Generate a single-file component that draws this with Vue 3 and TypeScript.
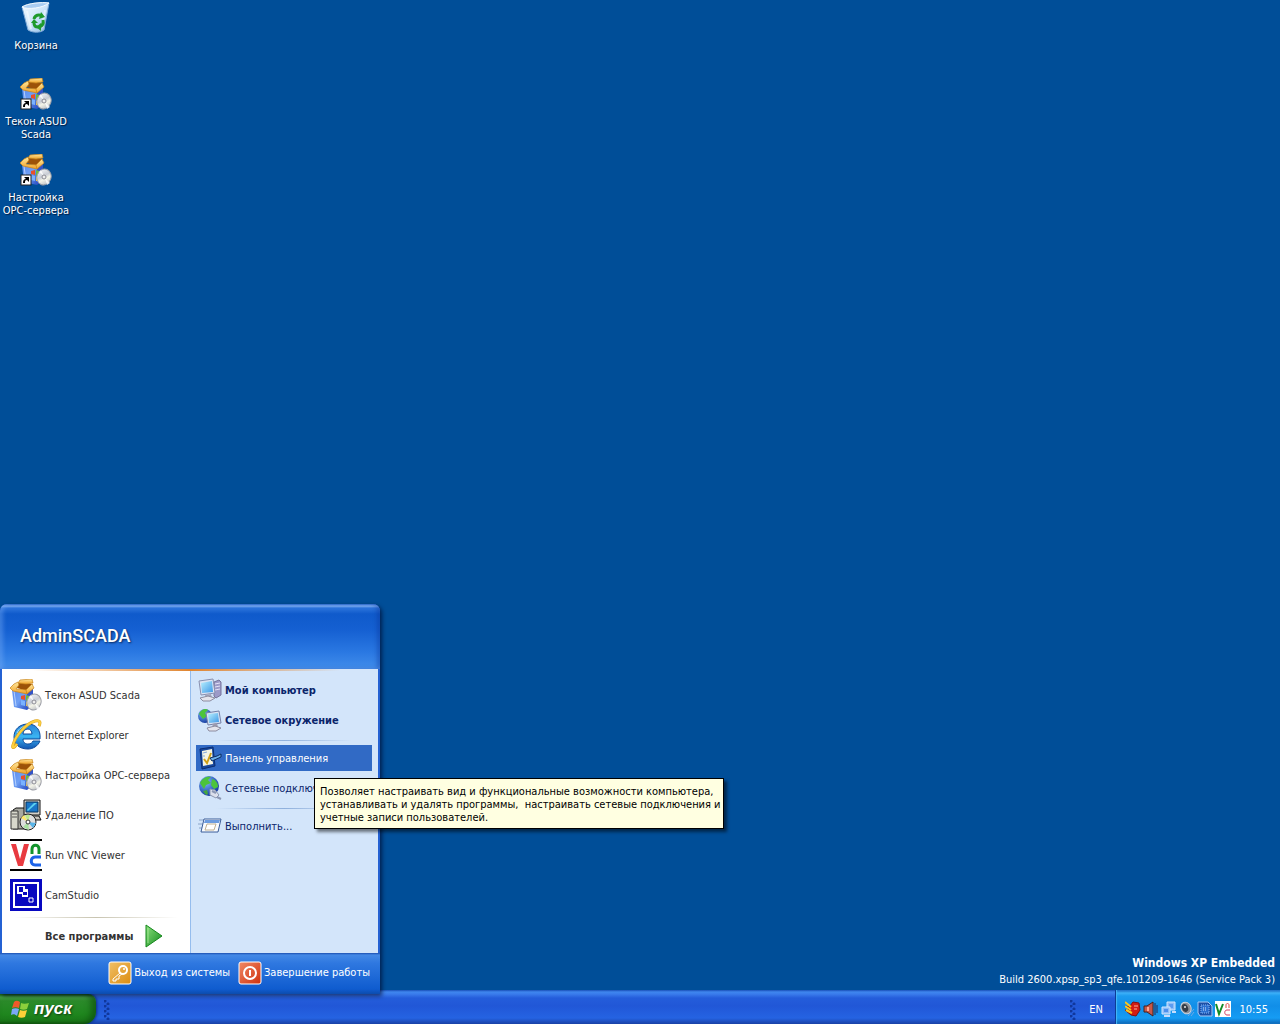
<script setup lang="ts">
interface Entry {
  icon: string
  label: string
}

const shortcuts: Entry[] = [
  { icon: 'bin', label: 'Корзина' },
  { icon: 'setup-link', label: 'Текон ASUD Scada' },
  { icon: 'setup-link', label: 'Настройка OPC-сервера' },
]

const programs: Entry[] = [
  { icon: 'setup', label: 'Текон ASUD Scada' },
  { icon: 'ie', label: 'Internet Explorer' },
  { icon: 'setup', label: 'Настройка OPC-сервера' },
  { icon: 'uninstall', label: 'Удаление ПО' },
  { icon: 'vnc', label: 'Run VNC Viewer' },
  { icon: 'cam', label: 'CamStudio' },
]

const places: Entry[] = [
  { icon: 'computer', label: 'Мой компьютер' },
  { icon: 'network', label: 'Сетевое окружение' },
]

const settings: Entry[] = [
  { icon: 'panel', label: 'Панель управления' },
  { icon: 'globe', label: 'Сетевые подключения' },
]

const activeItem = 'Панель управления'

const trayIcons: string[] = ['t-av', 't-sound', 't-lan', 't-speaker', 't-chip', 't-vnc']
</script>

<template>
  <div class="screen">
    <svg class="defs" width="0" height="0" aria-hidden="true">
      <defs>
        <linearGradient id="g-box" x1="0" y1="0" x2="1" y2="1">
          <stop offset="0" stop-color="#5c8cf0" />
          <stop offset="0.5" stop-color="#6fa0f4" />
          <stop offset="1" stop-color="#2b4fc4" />
        </linearGradient>
        <linearGradient id="g-flap" x1="0" y1="0" x2="0" y2="1">
          <stop offset="0" stop-color="#ffe9a0" />
          <stop offset="1" stop-color="#f0a024" />
        </linearGradient>
        <linearGradient id="g-disc" x1="0" y1="0" x2="1" y2="1">
          <stop offset="0" stop-color="#ffffff" />
          <stop offset="0.45" stop-color="#c8ccd4" />
          <stop offset="0.6" stop-color="#f4f4e8" />
          <stop offset="1" stop-color="#a8acb8" />
        </linearGradient>
        <linearGradient id="g-bin" x1="0" y1="0" x2="1" y2="1">
          <stop offset="0" stop-color="#f4fbff" />
          <stop offset="0.5" stop-color="#cfe6fa" />
          <stop offset="1" stop-color="#8dbbe8" />
        </linearGradient>
        <linearGradient id="g-ie" x1="0" y1="0" x2="0" y2="1">
          <stop offset="0" stop-color="#2a80d4" />
          <stop offset="0.5" stop-color="#39b4f2" />
          <stop offset="1" stop-color="#1254b0" />
        </linearGradient>
        <linearGradient id="g-screen" x1="0" y1="0" x2="1" y2="1">
          <stop offset="0" stop-color="#b8f0ff" />
          <stop offset="1" stop-color="#3d97e6" />
        </linearGradient>
        <radialGradient id="g-globe" cx="0.35" cy="0.3" r="0.8">
          <stop offset="0" stop-color="#7cb8ff" />
          <stop offset="1" stop-color="#0b2f96" />
        </radialGradient>
        <linearGradient id="g-arrow" x1="0" y1="0" x2="1" y2="1">
          <stop offset="0" stop-color="#8be07c" />
          <stop offset="1" stop-color="#118a1c" />
        </linearGradient>
        <linearGradient id="g-key" x1="0" y1="0" x2="1" y2="1">
          <stop offset="0" stop-color="#f0c068" />
          <stop offset="1" stop-color="#dc8c10" />
        </linearGradient>
        <linearGradient id="g-power" x1="0" y1="0" x2="1" y2="1">
          <stop offset="0" stop-color="#f08a66" />
          <stop offset="1" stop-color="#d0300c" />
        </linearGradient>
      </defs>

      <symbol id="bin" viewBox="0 0 32 32">
        <path d="M2 5C8 1 22 0 29 1l-5 27c-4 3-11 3-16 0z" fill="url(#g-bin)" stroke="#7fa9d6" />
        <path d="M2 5c6 3 21 1 27-4-7-1-21 0-27 4z" fill="#a9cdf2" stroke="#f4fbff" />
        <path d="M7 9l4 18M25 8l-3 18" stroke="#fff" stroke-width="2" opacity="0.5" />
        <g fill="none" stroke="#1f9a2c" stroke-width="3">
          <path d="M14 17c1-4 5-5 8-3" />
          <path d="M23 18c1 4-1 6-4 7" />
          <path d="M18 25c-3 0-4-2-4-4" />
        </g>
        <path d="M21 10l4 5-6 2zM21 21l-5 4 5 4zM11 21l3-4 4 4z" fill="#1f9a2c" />
      </symbol>

      <symbol id="setup" viewBox="0 0 32 32">
        <path d="M2 11l15 3v17L4 28z" fill="url(#g-box)" />
        <path d="M17 14l6-6v18l-6 5z" fill="#3454c8" />
        <path d="M4 12l2 15" stroke="#b4d0ff" />
        <path d="M4 8l5-4 14 1-6 7z" fill="#9c5208" />
        <path d="M8 4l2-3 12-1 1 4-7 1z" fill="url(#g-flap)" stroke="#c88418" stroke-width="0.7" />
        <path d="M0 9l4-4 4-2 1 3-3 4 11 1v4L3 12z" fill="url(#g-flap)" stroke="#c88418" stroke-width="0.7" />
        <path d="M16 11l6-6 2 4-7 6z" fill="url(#g-flap)" stroke="#c88418" stroke-width="0.7" />
        <path d="M11 17l4-1v5l-4-1z" fill="#e8502a" />
        <path d="M16 16l3 1v4l-3 1z" fill="#6cbc3c" />
        <path d="M11 21l4 1v5l-4-1z" fill="#7ab2ff" />
        <path d="M16 23l2-1v5h-2z" fill="#f8ca3c" />
        <ellipse cx="24" cy="23" rx="7" ry="8" transform="rotate(22 24 23)" fill="url(#g-disc)" stroke="#9c9ea6" />
        <path d="M24 22l-5-4 2-2zM25 24l2 7 3-2z" fill="#fff" opacity="0.8" />
        <circle cx="24" cy="23" r="2" fill="#eee" stroke="#8c8c94" />
      </symbol>

      <symbol id="setup-link" viewBox="0 0 32 32">
        <use href="#setup" width="32" height="32" />
        <rect x="1" y="21" width="10" height="10" fill="#fff" stroke="#222" />
        <path d="M3 29c0-3 1-4 3-4l-2-2h5v5l-2-2c-2 0-2 1-2 3z" fill="#000" />
      </symbol>

      <symbol id="ie" viewBox="0 0 32 32">
        <path d="M30 20H13c0 4 3 5 5 5 3 0 4-1 5-3h7c-2 5-7 8-12 8C10 30 4 26 4 18S10 5 18 5c8 0 13 6 12 15zM13 15h9c0-3-2-5-4-5-3 0-5 2-5 5z" fill="url(#g-ie)" stroke="#0d4a9c" />
        <path d="M7 14c2-5 6-7 11-7" fill="none" stroke="#a8e2ff" stroke-width="1" />
        <path d="M7 25c-3 4-5 5-4 1C5 18 15 5 25 2c5-1 6 1 4 5" fill="none" stroke="#dca018" stroke-width="3" />
        <path d="M7 25c-3 4-5 5-4 1C5 18 15 5 25 2c5-1 6 1 4 5" fill="none" stroke="#fcd040" stroke-width="2" />
      </symbol>

      <symbol id="uninstall" viewBox="0 0 32 32">
        <path d="M3 11l3-2h11v21H3z" fill="#a8a8a0" stroke="#111" />
        <path d="M1 12h7v18H1z" fill="#d8d8cc" stroke="#333" />
        <path d="M2 15h5M2 18h5" stroke="#555" />
        <path d="M14 1h16v15H14z" fill="#d4d0c8" stroke="#111" />
        <path d="M16 3h12v10H16z" fill="#1976c8" stroke="#07355f" />
        <path d="M17 11l7-7h3l-9 8z" fill="#5bd0f0" />
        <path d="M18 17h11l2 4H17z" fill="#c8c4bc" stroke="#111" />
        <circle cx="18" cy="23" r="8" fill="#ddd" stroke="#222" />
        <path d="M18 23l-7-4 3-3z" fill="#ffe86c" />
        <path d="M18 23l-3-7h5z" fill="#bce88c" />
        <path d="M18 23l8 1-3 5z" fill="#58b4e8" />
        <path d="M18 23l1 8-6-3z" fill="#a8e0a0" />
        <circle cx="18" cy="23" r="2" fill="#fff" stroke="#333" />
      </symbol>

      <symbol id="vnc" viewBox="0 0 32 32">
        <path d="M0 0h32v32H0z" fill="#fff" />
        <path d="M0 1h32M0 31h32" stroke="#000" stroke-width="2" />
        <path d="M1 5h5l4 15 4-15h5l-6 22H8z" fill="#e83a40" />
        <path d="M22 15v-5c0-5 7-5 7 0v5" fill="none" stroke="#13932c" stroke-width="3" />
        <path d="M31 18h-6c-5 0-5 8 0 8h6" fill="none" stroke="#1c63e8" stroke-width="3" />
      </symbol>

      <symbol id="cam" viewBox="0 0 32 32">
        <path d="M0 0h32v32H0z" fill="#0808c0" />
        <path d="M4 4h24v24H4z" fill="none" stroke="#fff" stroke-width="2" />
        <path d="M7 7h11v11H7z" fill="#fff" />
        <path d="M9 8h4v5H9zM13 13h4v3h-4zM7 15h5v3H7zM15 7h3v3h-3z" fill="#0808c0" />
        <path d="M19 19h4v4h-4z" fill="none" stroke="#fff" stroke-width="1" />
      </symbol>

      <symbol id="computer" viewBox="0 0 24 24">
        <path d="M16 4l5-2 2 2v13l-5 3-2-2z" fill="#9c9ac8" stroke="#77759c" />
        <path d="M17 6l5-1M17 9l5-1M17 12l5-1" stroke="#e4e2f8" />
        <path d="M1 3L15 1l2 14-14 2z" fill="#dce4f4" stroke="#8890b0" />
        <path d="M3 5l11-2 1 11-11 1z" fill="url(#g-screen)" />
        <path d="M7 17l6-1 1 4H8z" fill="#a4a4b8" />
        <path d="M2 20l8-2 7 2-5 3H5z" fill="#e4e4ec" stroke="#8c8ca0" />
      </symbol>

      <symbol id="network" viewBox="0 0 24 24">
        <circle cx="7" cy="8" r="7" fill="url(#g-globe)" />
        <path d="M1 6c2-5 7-6 9-4l-3 3 2 3-4 3z" fill="#4cc43c" />
        <path d="M8 5l13-2 2 12-13 2z" fill="#dce4f4" stroke="#7480a8" />
        <path d="M10 6l10-1 1 9-10 1z" fill="url(#g-screen)" />
        <path d="M14 16l5-1 1 4h-5z" fill="#9c9cb0" />
        <path d="M9 20l8-2 6 2-5 3h-7z" fill="#e4e4ec" stroke="#8c8ca0" />
      </symbol>

      <symbol id="panel" viewBox="0 0 24 24">
        <path d="M2 3l13-2 2 19-13 3z" fill="#17479c" stroke="#0b2c70" />
        <path d="M4 5l10-2 1 15-10 2z" fill="#f4f4e4" />
        <path d="M6 13l3 4 4-10" fill="none" stroke="#d0a018" stroke-width="2" />
        <path d="M5 7l4-1M5 10h2" stroke="#84a8dc" />
        <path d="M12 12l7-2 4-2v3l-9 4z" fill="#6cb0ec" stroke="#0c2c60" />
      </symbol>

      <symbol id="globe" viewBox="0 0 24 24">
        <circle cx="11" cy="10" r="10" fill="url(#g-globe)" />
        <path d="M2 7c3-6 8-7 11-6l-3 3 3 3-5 2-2 4zM14 3c4 1 6 4 6 8l-4 2-3-4z" fill="#4cc43c" />
        <path d="M5 15l4-1 1 4-2 1z" fill="#44a83c" />
        <path d="M12 13l5 1 4 5-3 3-6-3z" fill="#dce0ec" stroke="#8c98b0" />
        <path d="M14 15l4 2M19 21l4 2" stroke="#8c98b4" stroke-width="2" />
      </symbol>

      <symbol id="run" viewBox="0 0 24 24">
        <path d="M1 6h6M0 10h5M1 14h4" stroke="#8aa4c8" stroke-width="1" />
        <path d="M6 5h17l-3 13H3z" fill="#f8fbff" stroke="#3a5c98" stroke-linejoin="round" />
        <path d="M7 6h15l-1 3H6z" fill="#6c9ce0" />
        <path d="M9 10h9l-2 6H7z" fill="#fff" stroke="#c0b090" />
      </symbol>

      <symbol id="arrow" viewBox="0 0 18 24">
        <path d="M1 1l16 11L1 23z" fill="url(#g-arrow)" stroke="#15881c" stroke-linejoin="round" />
        <path d="M3 4v15" stroke="#b4f0a4" opacity="0.7" />
      </symbol>

      <symbol id="key" viewBox="0 0 24 24">
        <rect x="1" y="1" width="22" height="22" rx="2" fill="url(#g-key)" stroke="#fff" />
        <circle cx="15" cy="9" r="4" fill="none" stroke="#fff" stroke-width="2" />
        <path d="M12 12l-7 6v2h3v-2h3v-3l3-2" fill="none" stroke="#fff" stroke-width="1" />
        <circle cx="16" cy="8" r="1" fill="#fff" />
      </symbol>

      <symbol id="power" viewBox="0 0 24 24">
        <rect x="1" y="1" width="22" height="22" rx="2" fill="url(#g-power)" stroke="#fff" />
        <circle cx="12" cy="12" r="6" fill="none" stroke="#fff" stroke-width="2" />
        <path d="M12 9v6" stroke="#fff" stroke-width="2" />
      </symbol>

      <symbol id="flag" viewBox="0 0 20 20">
        <path d="M4 3c2-2 4-1 6 0L9 9C7 8 4 8 2 9z" fill="#f0592a" />
        <path d="M11 4c2 1 5 1 8 0l-2 6c-2 1-5 1-7 0z" fill="#8cd03c" />
        <path d="M2 10c2-1 5-1 7 0l-2 7c-2-2-4-2-6-1z" fill="#7ca8f8" />
        <path d="M10 11c2 1 5 1 7 0l-2 7c-2 1-5 1-7 0z" fill="#fcd038" />
      </symbol>

      <symbol id="t-av" viewBox="0 0 16 16">
        <path d="M0 1l5 4 3-4 6 1 1 7-4 6-5-1-6-5 5 1-5-5 5 1z" fill="#d41c14" stroke="#84100c" />
        <path d="M0 1l6 5M0 5l6 4M1 9l6 3" stroke="#f8c820" stroke-width="2" />
        <path d="M9 5h4M9 8h3" stroke="#ffb098" stroke-width="1" />
      </symbol>
      <symbol id="t-sound" viewBox="0 0 16 16">
        <path d="M1 5h3l6-4v14l-6-4H1z" fill="#c85848" stroke="#44201c" />
        <path d="M5 6v4" stroke="#ffa890" stroke-width="2" />
        <path d="M12 2v12M14 4v8" stroke="#202c58" />
      </symbol>
      <symbol id="t-lan" viewBox="0 0 16 16">
        <path d="M6 1h8v8H6z" fill="#8cbcf8" stroke="#d0e8ff" />
        <path d="M8 3h4v4H8z" fill="#5c9cf0" />
        <path d="M1 6h8v7H1z" fill="#8cbcf8" stroke="#d0e8ff" />
        <path d="M3 8h4v3H3z" fill="#4c90ec" />
        <path d="M3 15h6M11 11h4" stroke="#c4dcfc" stroke-width="2" />
      </symbol>
      <symbol id="t-speaker" viewBox="0 0 16 16">
        <ellipse cx="7" cy="7" rx="5" ry="6" transform="rotate(-25 7 7)" fill="#8c9098" stroke="#d0d4dc" />
        <ellipse cx="6" cy="7" rx="3" ry="4" transform="rotate(-25 6 7)" fill="#343c48" />
        <circle cx="6" cy="6" r="1" fill="#e8e8e8" />
        <path d="M9 15l6-7M12 15l3-4" stroke="#70a8e4" />
      </symbol>
      <symbol id="t-chip" viewBox="0 0 16 16">
        <path d="M1 1h10l4 4v10H3l-2-3z" fill="#1c50a8" stroke="#a8c8f4" />
        <path d="M4 4h8v8H4z" fill="#2c70d0" stroke="#8cb8f4" stroke-dasharray="1 1" />
        <path d="M6 7h4M6 9h4" stroke="#d8e8ff" stroke-dasharray="1 1" />
      </symbol>
      <symbol id="t-vnc" viewBox="0 0 16 16">
        <path d="M0 0h16v16H0z" fill="#fff" />
        <path d="M1 3l3 10L8 3" fill="none" stroke="#138c28" stroke-width="2" />
        <path d="M11 7V4c0-2 3-2 3 0v3" fill="none" stroke="#e04848" stroke-width="1" />
        <path d="M15 9h-3c-3 0-3 5 0 5h3" fill="none" stroke="#d03c60" stroke-width="1" />
      </symbol>
    </svg>

    <main class="desktop">
      <nav class="shortcuts">
        <button v-for="item in shortcuts" :key="item.label" type="button" class="shortcut">
          <svg class="icon-32" aria-hidden="true"><use :href="'#' + item.icon" /></svg>
          <span>{{ item.label }}</span>
        </button>
      </nav>
      <div class="watermark">
        <strong>Windows XP Embedded</strong>
        <span>Build 2600.xpsp_sp3_qfe.101209-1646 (Service Pack 3)</span>
      </div>
    </main>

    <section class="menu">
      <header class="menu-head">AdminSCADA</header>
      <div class="menu-body">
        <div class="col-left">
          <button v-for="item in programs" :key="item.label" type="button" class="program">
            <svg class="icon-32" aria-hidden="true"><use :href="'#' + item.icon" /></svg>
            <span>{{ item.label }}</span>
          </button>
          <hr class="rule-left" />
          <button type="button" class="all">
            <span>Все программы</span>
            <svg class="arrow" aria-hidden="true"><use href="#arrow" /></svg>
          </button>
        </div>
        <div class="col-right">
          <button v-for="item in places" :key="item.label" type="button" class="place strong">
            <svg class="icon-24" aria-hidden="true"><use :href="'#' + item.icon" /></svg>
            <span>{{ item.label }}</span>
          </button>
          <hr class="rule-right" />
          <button
            v-for="item in settings"
            :key="item.label"
            type="button"
            class="place"
            :class="{ active: item.label === activeItem }"
          >
            <svg class="icon-24" aria-hidden="true"><use :href="'#' + item.icon" /></svg>
            <span>{{ item.label }}</span>
          </button>
          <hr class="rule-right" />
          <button type="button" class="place">
            <svg class="icon-24" aria-hidden="true"><use href="#run" /></svg>
            <span>Выполнить...</span>
          </button>
        </div>
      </div>
      <footer class="menu-foot">
        <button type="button" class="session">
          <svg class="icon-24" aria-hidden="true"><use href="#key" /></svg>
          <span>Выход из системы</span>
        </button>
        <button type="button" class="session">
          <svg class="icon-24" aria-hidden="true"><use href="#power" /></svg>
          <span>Завершение работы</span>
        </button>
      </footer>
      <div class="tooltip" role="tooltip">
        Позволяет настраивать вид и функциональные возможности компьютера,<br />
        устанавливать и удалять программы,&nbsp; настраивать сетевые подключения и<br />
        учетные записи пользователей.
      </div>
    </section>

    <div class="taskbar">
      <button type="button" class="start">
        <svg class="flag" aria-hidden="true"><use href="#flag" /></svg>
        <span>пуск</span>
      </button>
      <i class="grip"></i>
      <div class="spacer"></div>
      <i class="grip"></i>
      <button type="button" class="lang">EN</button>
      <div class="tray">
        <svg v-for="name in trayIcons" :key="name" class="icon-16" aria-hidden="true"><use :href="'#' + name" /></svg>
        <time>10:55</time>
      </div>
    </div>
  </div>
</template>

<style>
body {
  margin: 0;
  background: #004e98;
}
</style>

<style scoped>
.screen {
  position: relative;
  display: flex;
  flex-direction: column;
  min-height: 100vh;
  background: #004e98;
  font-family: "DejaVu Sans Condensed", "DejaVu Sans", sans-serif;
  font-size: 11px;
  line-height: 13px;
  overflow: hidden;
}
.defs {
  position: absolute;
}
button {
  font: inherit;
  color: inherit;
  background: none;
  border: 0;
  margin: 0;
  padding: 0;
  text-align: left;
}
svg {
  display: block;
  flex: none;
}
.icon-32 {
  width: 32px;
  height: 32px;
}
.icon-24 {
  width: 24px;
  height: 24px;
}
.icon-16 {
  width: 16px;
  height: 16px;
}

.desktop {
  flex: 1;
  display: flex;
  justify-content: space-between;
  color: #fff;
}
.shortcuts {
  display: flex;
  flex-direction: column;
  padding-top: 2px;
}
.shortcut {
  display: flex;
  flex-direction: column;
  align-items: center;
  gap: 5px;
  width: 72px;
  height: 76px;
  text-align: center;
  text-shadow: 1px 1px 1px #001c40;
}
.watermark {
  display: flex;
  flex-direction: column;
  align-self: flex-end;
  align-items: flex-end;
  gap: 2px;
  padding: 0 5px 4px 0;
}
.watermark strong {
  font-size: 12px;
  line-height: 16px;
}

.menu {
  position: absolute;
  left: 0;
  bottom: 30px;
  z-index: 2;
  box-sizing: border-box;
  width: 380px;
  padding: 0 2px;
  border-radius: 7px 7px 0 0;
  background: #2461d3;
  box-shadow: 2px 2px 4px rgba(0, 0, 30, 0.6);
}
.menu-head {
  display: flex;
  align-items: center;
  box-sizing: border-box;
  height: 65px;
  margin: 0 -2px;
  padding: 0 20px 2px;
  border-radius: 7px 7px 0 0;
  background: linear-gradient(#1b5fc6 0, #7fb0f4 2px, #2c74dc 4px, #0f5acb 10px, #1560d2 26px, #2a78e2 48px, #408cea 64px);
  box-shadow: inset 3px 0 4px rgba(130, 180, 250, 0.4), inset -3px 0 4px rgba(10, 50, 150, 0.4);
  color: #fff;
  font-family: Roboto, "Liberation Sans", sans-serif;
  font-size: 18px;
  font-weight: 500;
  line-height: 20px;
  text-shadow: 1px 1px 2px #08285c;
}
.menu-body {
  position: relative;
  display: flex;
  height: 284px;
}
.menu-body::before {
  content: "";
  position: absolute;
  top: 0;
  left: 0;
  right: 0;
  height: 2px;
  background: linear-gradient(90deg, #fff 8%, #e08530 50%, #d3e5fa 90%);
}
.col-left {
  box-sizing: border-box;
  width: 188px;
  padding: 6px 8px 0;
  background: #fff;
  color: #333;
}
.program {
  display: flex;
  align-items: center;
  gap: 3px;
  width: 100%;
  height: 40px;
}
hr {
  height: 1px;
  border: 0;
}
.rule-left {
  margin: 2px 4px;
  background: linear-gradient(90deg, #fff, #c8c4b0 50%, #fff);
}
.all {
  display: flex;
  align-items: center;
  gap: 12px;
  width: 100%;
  height: 32px;
  padding-left: 35px;
  font-weight: 700;
}
.arrow {
  width: 18px;
  height: 24px;
}
.col-right {
  display: flex;
  flex: 1;
  flex-direction: column;
  padding: 6px 6px 0 5px;
  border-left: 1px solid #95bdee;
  background: #d3e5fa;
  color: #0a246a;
}
.place {
  display: flex;
  align-items: center;
  gap: 3px;
  height: 26px;
  margin: 2px 0;
  padding-left: 2px;
  white-space: nowrap;
}
.strong {
  font-weight: 700;
}
.place.active {
  background: #316ac5;
  color: #fff;
}
.rule-right {
  margin: 5px 20px 2px;
  background: linear-gradient(90deg, #d3e5fa, #8fb0dc 50%, #d3e5fa);
}
.menu-foot {
  display: flex;
  align-items: center;
  justify-content: flex-end;
  gap: 8px;
  box-sizing: border-box;
  height: 41px;
  margin: 0 -2px;
  padding: 0 10px 2px 0;
  background: linear-gradient(#1c4fb0 0, #4489e6 2px, #2f78e0 10px, #0f5ccf 36px, #0c4cae 41px);
  color: #fff;
}
.session {
  display: flex;
  align-items: center;
  gap: 2px;
  white-space: nowrap;
}
.tooltip {
  position: absolute;
  left: 314px;
  top: 174px;
  z-index: 3;
  box-sizing: border-box;
  width: 410px;
  padding: 6px 5px 4px;
  border: 1px solid #000;
  background: #ffffe1;
  box-shadow: 3px 3px 3px rgba(0, 0, 0, 0.5);
  color: #000;
  white-space: nowrap;
}

.taskbar {
  display: flex;
  align-items: flex-end;
  height: 34px;
  background: linear-gradient(#1a50b8 0, #3f86ee 2px, #3a7cec 4px, #245ddb 8px, #2157d7 16px, #2563e2 28px, #1941a5 34px);
  color: #fff;
}
.start {
  display: flex;
  align-items: center;
  gap: 4px;
  box-sizing: border-box;
  width: 96px;
  height: 30px;
  padding-left: 10px;
  border-radius: 0 8px 12px 0;
  background: linear-gradient(#1e6c1c 0, #4aa848 3px, #2b8a2a 7px, #1f861e 20px, #1b7a1a 27px, #125810 30px);
  box-shadow: inset -5px 0 6px rgba(10, 70, 10, 0.6), 1px 0 3px #0c2c80;
  font-family: "Liberation Sans", sans-serif;
  font-size: 17px;
  font-style: italic;
  font-weight: 700;
  line-height: 20px;
  text-shadow: 1px 1px 2px #103c10;
}
.flag {
  width: 20px;
  height: 20px;
}
.grip {
  width: 6px;
  height: 20px;
  margin: 0 6px 4px 8px;
  background:
    radial-gradient(circle at 1px 1px, #10379c 1px, transparent 2px) 0 0 / 6px 5px,
    radial-gradient(circle at 4px 4px, #10379c 1px, transparent 2px) 0 0 / 6px 5px;
}
.spacer {
  flex: 1;
}
.lang {
  width: 28px;
  height: 30px;
  margin-right: 5px;
  text-align: center;
}
.tray {
  display: flex;
  align-items: center;
  gap: 2px;
  box-sizing: border-box;
  width: 165px;
  height: 34px;
  padding: 4px 12px 0 9px;
  border-left: 1px solid #0c3c94;
  background: linear-gradient(#1a64c0 0, #3cb0f8 3px, #1c9cf0 6px, #118ee8 16px, #159cf4 28px, #0c64b4 34px);
  box-shadow: inset 1px 0 1px #48b8f8;
}
.tray time {
  margin-left: auto;
}
</style>
